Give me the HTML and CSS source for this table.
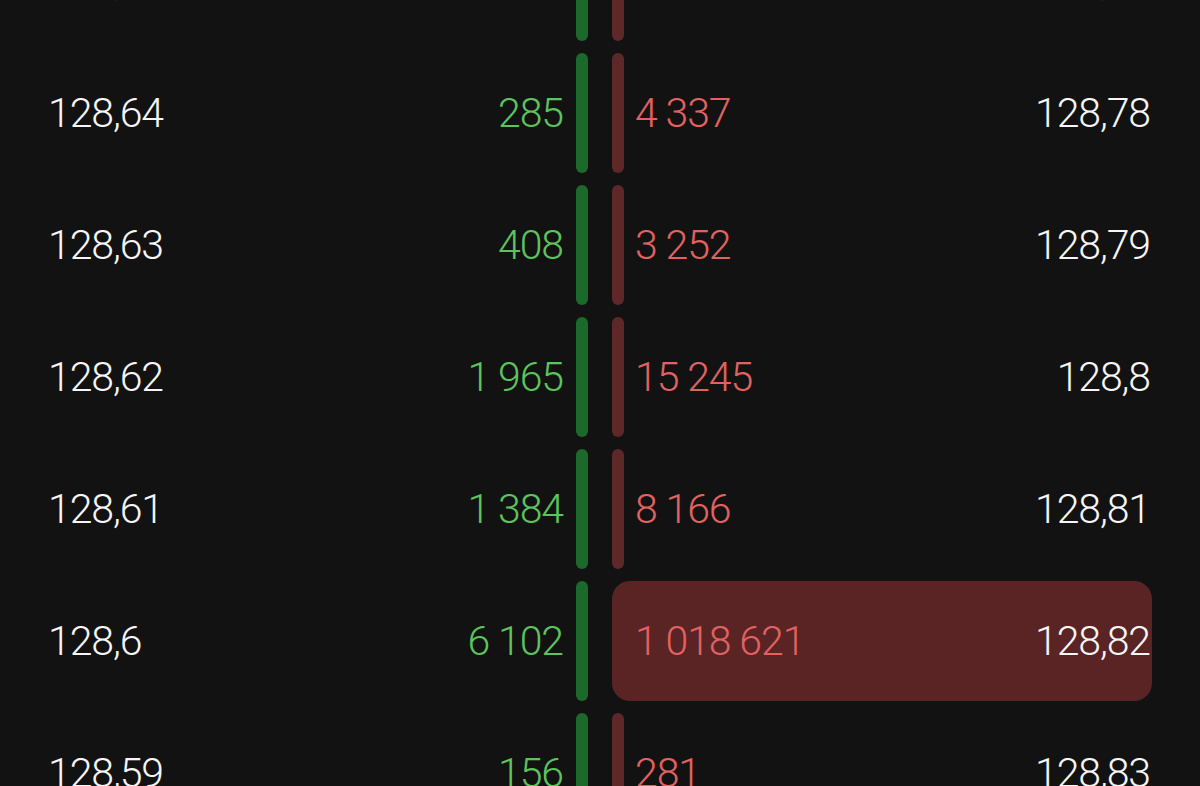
FILE: index.html
```html
<!DOCTYPE html>
<html lang="ru">
<head>
<meta charset="utf-8">
<link rel="stylesheet" href="styles.css">
</head>
<body>
<div class="book">
  <div class="row">
    <div class="bid"><span class="price">128,65</span><span class="qty-bid">512</span><span class="bar bar-bid"></span></div>
    <div class="ask"><span class="bar bar-ask"></span><span class="qty-ask">2 140</span><span class="price">128,77</span></div>
  </div>
  <div class="row">
    <div class="bid"><span class="price">128,64</span><span class="qty-bid">285</span><span class="bar bar-bid"></span></div>
    <div class="ask"><span class="bar bar-ask"></span><span class="qty-ask">4 337</span><span class="price">128,78</span></div>
  </div>
  <div class="row">
    <div class="bid"><span class="price">128,63</span><span class="qty-bid">408</span><span class="bar bar-bid"></span></div>
    <div class="ask"><span class="bar bar-ask"></span><span class="qty-ask">3 252</span><span class="price">128,79</span></div>
  </div>
  <div class="row">
    <div class="bid"><span class="price">128,62</span><span class="qty-bid">1 965</span><span class="bar bar-bid"></span></div>
    <div class="ask"><span class="bar bar-ask"></span><span class="qty-ask">15 245</span><span class="price">128,8</span></div>
  </div>
  <div class="row">
    <div class="bid"><span class="price">128,61</span><span class="qty-bid">1 384</span><span class="bar bar-bid"></span></div>
    <div class="ask"><span class="bar bar-ask"></span><span class="qty-ask">8 166</span><span class="price">128,81</span></div>
  </div>
  <div class="row">
    <div class="bid"><span class="price">128,6</span><span class="qty-bid">6 102</span><span class="bar bar-bid"></span></div>
    <div class="ask ask-hl"><span class="bar bar-ask"></span><span class="qty-ask">1 018 621</span><span class="price">128,82</span></div>
  </div>
  <div class="row">
    <div class="bid"><span class="price">128,59</span><span class="qty-bid">156</span><span class="bar bar-bid"></span></div>
    <div class="ask"><span class="bar bar-ask"></span><span class="qty-ask">281</span><span class="price">128,83</span></div>
  </div>
</div>
</body>
</html>
```

FILE: styles.css
```css
html, body {
  margin: 0;
  padding: 0;
  background: #121212;
  overflow: hidden;
  height: 786px;
}

body {
  font-family: Roboto, "Noto Sans", sans-serif;
  font-weight: 300;
  font-size: 41px;
  letter-spacing: -1.1px;
}

.book {
  display: flex;
  flex-direction: column;
  margin-top: -85px;
}

.row {
  display: flex;
  gap: 24px;
  height: 132px;
  padding: 6px 48px;
  box-sizing: border-box;
}

.bid {
  flex: 0 0 540px;
  display: flex;
  align-items: center;
  height: 120px;
}

.bid .price {
  flex: 1;
}

.qty-bid {
  color: #5cc45c;
  margin-right: 13px;
}

.ask {
  flex: 1;
  display: flex;
  align-items: center;
  height: 120px;
  padding-right: 2px;
  border-radius: 18px;
}

.ask-hl {
  background: #5a2424;
}

.ask-hl .bar-ask {
  background: transparent;
}

.qty-ask {
  color: #e26262;
  margin-left: 11px;
  flex: 1;
}

.price {
  color: #f6f6f6;
}

.bar {
  width: 12px;
  height: 120px;
  border-radius: 6px;
  flex: 0 0 12px;
}

.bar-bid {
  background: #1b6a2b;
}

.bar-ask {
  background: #5e2828;
}
```
